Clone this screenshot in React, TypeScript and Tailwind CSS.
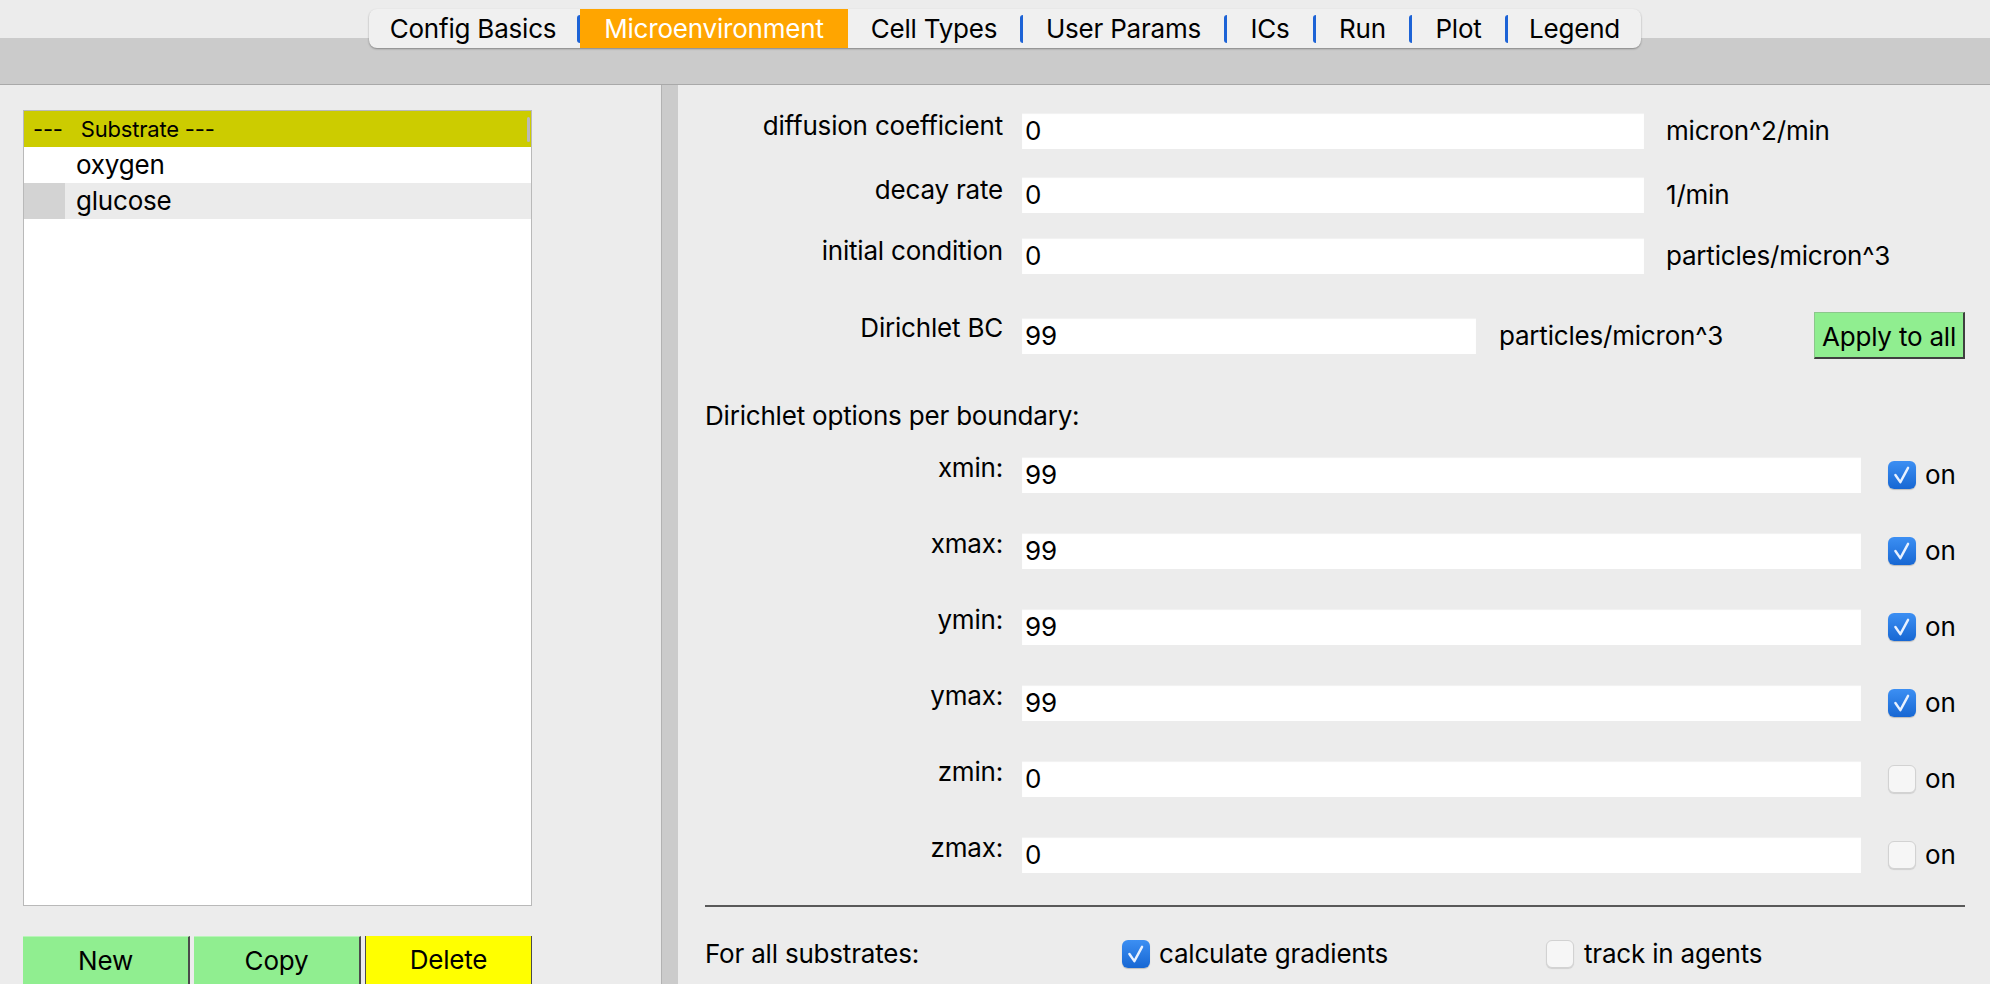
import React from 'react';

const tabs = [
  { label: 'Config Basics', w: 'w-[208px]', sep: false, active: false },
  { label: 'Microenvironment', w: 'w-[268px]', sep: true, active: true },
  { label: 'Cell Types', w: 'w-[172px]', sep: false, active: false },
  { label: 'User Params', w: 'w-[201px]', sep: true, active: false },
  { label: 'ICs', w: 'w-[86px]', sep: true, active: false },
  { label: 'Run', w: 'w-[93px]', sep: true, active: false },
  { label: 'Plot', w: 'w-[93px]', sep: true, active: false },
  { label: 'Legend', w: 'w-[133px]', sep: true, active: false },
];

const boundaries = [
  { name: 'xmin:', value: '99', on: true },
  { name: 'xmax:', value: '99', on: true },
  { name: 'ymin:', value: '99', on: true },
  { name: 'ymax:', value: '99', on: true },
  { name: 'zmin:', value: '0', on: false },
  { name: 'zmax:', value: '0', on: false },
];

function CheckBox({ checked }: { checked: boolean }) {
  if (!checked) {
    return (
      <div className="w-[28px] h-[28px] shrink-0 rounded-[6px] bg-[#f6f6f6] border border-[#d2d2d2] shadow-[0_1px_1px_rgba(0,0,0,0.12)]" />
    );
  }
  return (
    <div className="w-[28px] h-[28px] shrink-0 rounded-[6px] bg-[linear-gradient(to_bottom,#3c8ff3,#1767d3)] flex items-center justify-center shadow-[0_1px_1px_rgba(0,0,0,0.2)]">
      <svg width="22" height="22" viewBox="0 0 20 20" fill="none">
        <path d="M4 10 L8.5 16.5 L15.5 3.5" stroke="#e8f1ff" strokeWidth="2.2" strokeLinecap="round" strokeLinejoin="round" />
      </svg>
    </div>
  );
}

function Field({ value, w }: { value: string; w: string }) {
  return (
    <div className={`${w} h-[36px] shrink-0 bg-white shadow-[inset_0_1px_1px_rgba(0,0,0,0.06)] flex items-center pl-[3px] leading-[32px]`}>
      {value}
    </div>
  );
}

export default function App() {
  return (
    <div className="w-[1990px] h-[984px] overflow-hidden bg-[#ececec] font-['Inter',sans-serif] text-[26px] leading-[32px] tracking-[-0.2px] text-black flex flex-col">
      {/* TAB HEADER */}
      <div className="h-[85px] shrink-0 border-b border-[#a9a9a9] bg-[linear-gradient(to_bottom,#ececec_38px,#cbcbcb_38px)] pl-[369px] pt-[9px]">
        <div className="flex h-[39px] w-[1272px] rounded-[8px] bg-[#f0f0f0] shadow-[0_1px_2px_rgba(0,0,0,0.35)] overflow-hidden">
          {tabs.map((t) => (
            <React.Fragment key={t.label}>
              {t.sep && (
                <div className="w-[3px] shrink-0 flex items-center">
                  <div className="w-[3px] h-[28px] rounded-l-full bg-[#1d63d6]" />
                </div>
              )}
              <div
                className={`${t.w} shrink-0 flex items-center justify-center ${
                  t.active ? 'bg-[#ffa500] text-white' : 'text-black'
                }`}
              >
                {t.label}
              </div>
            </React.Fragment>
          ))}
        </div>
      </div>

      <div className="flex flex-1 min-h-0">
        {/* LEFT: substrate list */}
        <div className="w-[661px] shrink-0 pl-[23px] pt-[25px] flex flex-col">
          <div className="w-[509px] h-[798px] bg-white border border-[#b9b9b9] flex flex-col">
            <div className="h-[36px] bg-[#cccc00] flex items-center text-[22px] pl-[9px] pr-[1px]">
              <span>---</span>
              <span className="ml-[18px]">Substrate ---</span>
              <div className="ml-auto w-[3px] h-[25px] bg-[#b9b9b9] rounded-sm" />
            </div>
            <div className="h-[36px] flex items-center pl-[52px]">oxygen</div>
            <div className="h-[36px] flex items-center bg-[#ebebeb]">
              <div className="w-[41px] h-full bg-[#d3d3d3]" />
              <span className="ml-[11px]">glucose</span>
            </div>
          </div>
          <div className="mt-[30px] flex gap-[4px]">
            <button className="w-[167px] h-[48px] bg-[#90ee90] border-r-2 border-t border-[#4b4b4b] border-t-[#b8f5b8]">New</button>
            <button className="w-[167px] h-[48px] bg-[#90ee90] border-r-2 border-t border-[#4b4b4b] border-t-[#b8f5b8]">Copy</button>
            <button className="w-[167px] h-[48px] bg-[#ffff00] border-r border-l border-[#4b4b4b]">Delete</button>
          </div>
        </div>

        {/* SPLITTER */}
        <div className="w-[17px] shrink-0 bg-[#cbcbcb] border-l border-[#b2b2b2]" />

        {/* RIGHT: substrate params */}
        <div className="flex-1 pl-[27px] pr-[25px] pt-[28px] flex flex-col">
          <div className="flex items-start">
            <div className="w-[298px] mr-[19px] text-right -mt-[3px]">diffusion coefficient</div>
            <Field value="0" w="w-[622px]" />
            <div className="ml-[22px] self-center">micron^2/min</div>
          </div>
          <div className="flex items-start mt-[28px]">
            <div className="w-[298px] mr-[19px] text-right -mt-[3px]">decay rate</div>
            <Field value="0" w="w-[622px]" />
            <div className="ml-[22px] self-center">1/min</div>
          </div>
          <div className="flex items-start mt-[25px]">
            <div className="w-[298px] mr-[19px] text-right -mt-[3px]">initial condition</div>
            <Field value="0" w="w-[622px]" />
            <div className="ml-[22px] self-center">particles/micron^3</div>
          </div>
          <div className="flex items-center mt-[38px]">
            <div className="w-[298px] mr-[19px] text-right self-start">Dirichlet BC</div>
            <Field value="99" w="w-[454px]" />
            <div className="ml-[23px]">particles/micron^3</div>
            <button className="ml-auto w-[151px] h-[47px] bg-[#90ee90] border-t border-l border-[#8cc78c] border-b-2 border-r-2 border-b-[#3f3f3f] border-r-[#3f3f3f] pt-[4px]">
              Apply to all
            </button>
          </div>

          <div className="mt-[41px]">Dirichlet options per boundary:</div>

          <div className="mt-[25px] flex flex-col gap-[40px]">
            {boundaries.map((b) => (
              <div key={b.name} className="flex items-start">
                <div className="w-[298px] mr-[19px] text-right -mt-[5px]">{b.name}</div>
                <Field value={b.value} w="w-[839px]" />
                <div className="ml-[27px] self-center flex items-center">
                  <CheckBox checked={b.on} />
                  <span className="ml-[9px]">on</span>
                </div>
              </div>
            ))}
          </div>

          <div className="mt-[32px] h-[2px] bg-[#595959]" />

          <div className="mt-[33px] h-[28px] flex items-center">
            <div className="w-[417px]">For all substrates:</div>
            <div className="w-[424px] flex items-center">
              <CheckBox checked={true} />
              <span className="ml-[9px]">calculate gradients</span>
            </div>
            <div className="flex items-center">
              <CheckBox checked={false} />
              <span className="ml-[10px]">track in agents</span>
            </div>
          </div>
        </div>
      </div>
    </div>
  );
}
